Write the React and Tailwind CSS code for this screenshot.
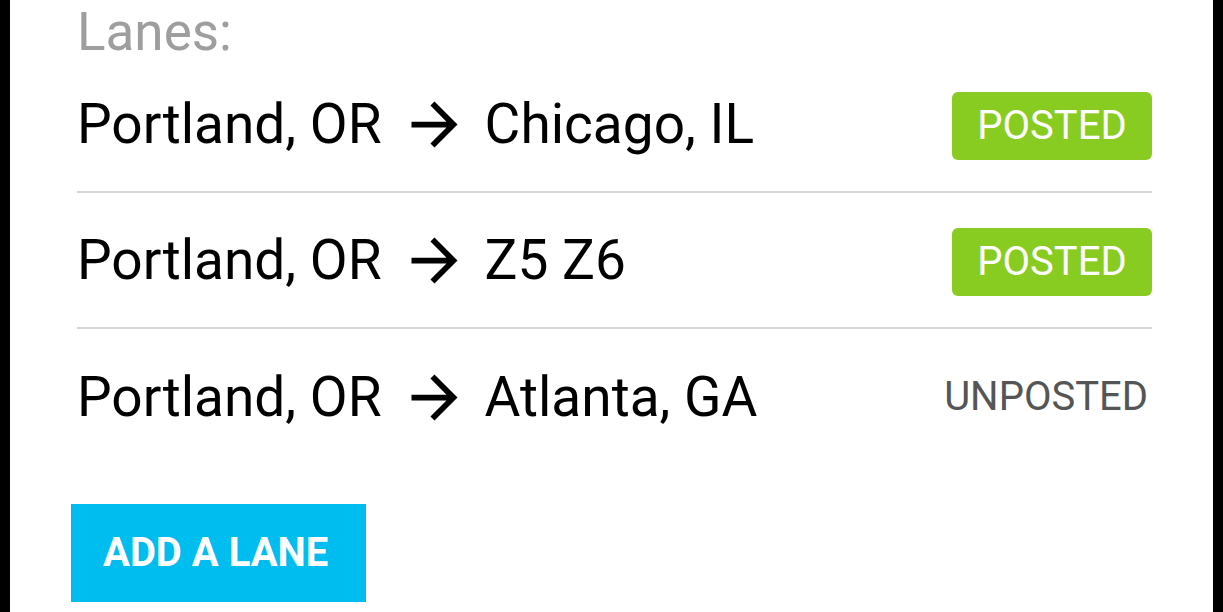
import React from "react";

const lanes = [
  { from: "Portland, OR", to: "Chicago, IL", posted: true },
  { from: "Portland, OR", to: "Z5 Z6", posted: true },
  { from: "Portland, OR", to: "Atlanta, GA", posted: false },
];

const Arrow = () => (
  <svg
    className="w-[69px] h-[69px] ml-[18px] mr-[16px] shrink-0"
    viewBox="0 0 24 24"
    fill="currentColor"
  >
    <path d="M12 4l-1.41 1.41L16.17 11H4v2h12.17l-5.58 5.59L12 20l8-8z" />
  </svg>
);

const LaneRow = ({ lane, last }) => (
  <div
    className={`flex items-center justify-between h-[136px] ${
      last ? "" : "border-b-2 border-[#d6d6d6]"
    }`}
  >
    <div className="flex items-center text-[55px] leading-none text-black">
      <span>{lane.from}</span>
      <Arrow />
      <span>{lane.to}</span>
    </div>
    {lane.posted ? (
      <div className="flex items-center justify-center w-[200px] h-[68px] mt-[4px] rounded-[6px] bg-[#88cc22] text-white text-[40px] leading-none">
        POSTED
      </div>
    ) : (
      <div className="text-[40px] leading-none text-[#555] pr-[4px]">UNPOSTED</div>
    )}
  </div>
);

export default function App() {
  return (
    <div
      className="flex h-[612px] w-full bg-black px-[10px] overflow-hidden"
      style={{ fontFamily: "Roboto, 'Liberation Sans', sans-serif" }}
    >
      <div className="flex-1 bg-white pl-[67px] pr-[61px] pt-[7px]">
        {/* Section label */}
        <div className="text-[53px] leading-[50px] text-[#9e9e9e]">Lanes:</div>

        {/* Lanes list */}
        <div>
          {lanes.map((lane, i) => (
            <LaneRow key={i} lane={lane} last={i === lanes.length - 1} />
          ))}
        </div>

        <button className="flex items-center mt-[39px] -ml-[6px] w-[295px] h-[98px] pl-[32px] bg-[#00bdf0] text-white text-[40px] font-bold leading-none">
          ADD A LANE
        </button>
      </div>
    </div>
  );
}
